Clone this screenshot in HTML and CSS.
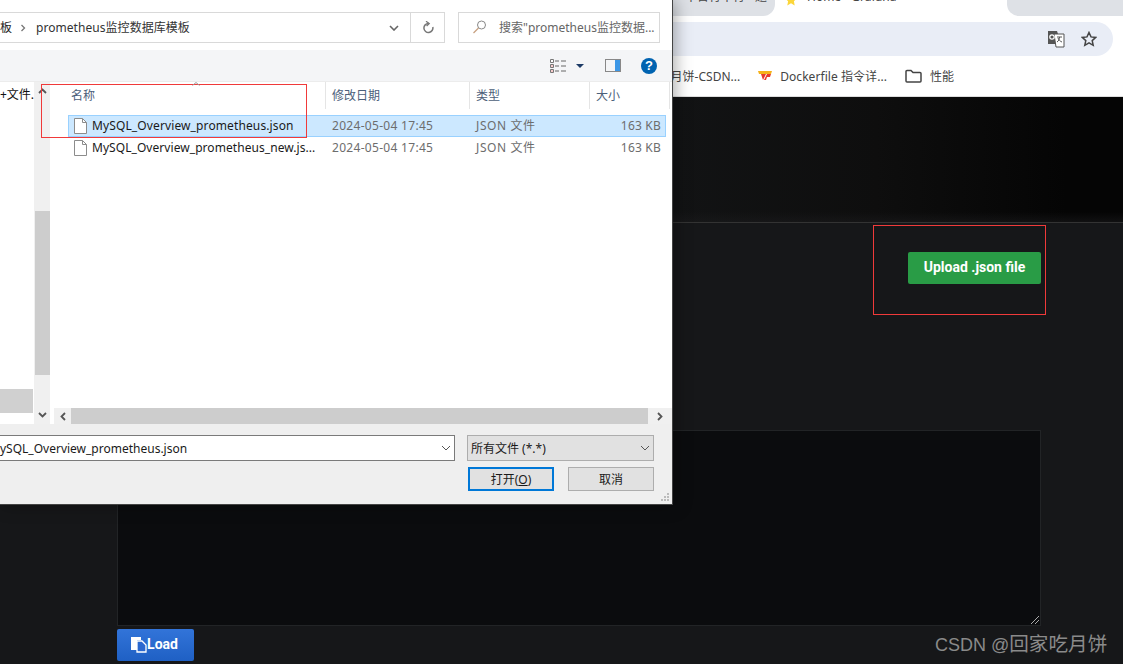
FILE: index.html
```html
<!DOCTYPE html>
<html lang="en">
<head>
    <meta charset="UTF-8">
    <title>Import dashboard</title>
    <link rel="stylesheet" href="styles.css">
</head>
<body>

<!-- Browser behind the dialog -->
<div class="browser">
    <div class="tabs">
        <div class="tab tab-left"><span class="tab-text">平台行不行 - 题</span></div>
        <div class="tab tab-active">
            <svg class="tab-icon" width="12" height="12" viewBox="0 0 12 12"><path d="M6 0l1.8 3.8 4.2.5-3.1 2.9.8 4.2L6 9.3 2.3 11.4l.8-4.2L0 4.3l4.2-.5z" fill="#fbd63a"/></svg>
            <span class="tab-text">Home - Grafana</span>
        </div>
        <div class="tab tab-right"></div>
    </div>
    <div class="address-row">
        <div class="address-bar">
            <svg class="translate-icon" width="18" height="18" viewBox="0 0 18 18">
                <path d="M1 1h9l1 3v10H1z" fill="#555"/>
                <path d="M7 4h10v13H9z" fill="#fff" stroke="#555"/>
                <circle cx="5" cy="7" r="2.2" fill="none" stroke="#fff" stroke-width="1.2"/>
                <path d="M10 7h5M12.500 7c0 2.500-1 4-2.500 5M11 8c.8 2 2.200 3.400 4 4" fill="none" stroke="#555"/>
            </svg>
            <svg class="star-icon" width="16" height="16" viewBox="0 0 16 16"><path d="M8 1.500l2 4.400 4.800.5-3.600 3.200 1 4.700L8 11.900l-4.200 2.400 1-4.700L1.200 6.400 6 5.900z" fill="none" stroke="#444" stroke-width="1.500"/></svg>
        </div>
    </div>
    <div class="bookmarks">
        <span class="bookmark bookmark-cut">月饼-CSDN...</span>
        <span class="bookmark">
            <svg width="14" height="10" viewBox="0 0 14 10"><path d="M0 0h14l-1 3H1z" fill="#f5b21a"/><path d="M3 3h5L5 9zM9 3h4l-1 3H9L8 9H6z" fill="#e8392c"/></svg>
            <span class="bookmark-wide">Dockerfile 指令详...</span>
        </span>
        <span class="bookmark">
            <svg width="17" height="14" viewBox="0 0 17 14"><path d="M1 2.500a1 1 0 0 1 1-1h4l2 2h7a1 1 0 0 1 1 1v7.500a1 1 0 0 1-1 1H2a1 1 0 0 1-1-1z" fill="none" stroke="#444" stroke-width="1.500"/></svg>
            性能
        </span>
    </div>
    <div class="page-header"></div>
    <div class="page-body">
        <div class="upload-row"><button class="upload-btn">Upload .json file</button></div>
        <div class="json-box">
            <svg class="resize-grip" width="10" height="10" viewBox="0 0 10 10"><path d="M1 9l8-8M5 9l4-4" stroke="#aaa" fill="none"/></svg>
        </div>
        <button class="load-btn">
            <svg width="16" height="17" viewBox="0 0 16 17"><path d="M0 1h10v3H6v10H0z" fill="#fff"/><path d="M6 5h5l4 4v7H6z" fill="#2a68cf" stroke="#fff" stroke-width="1.300"/></svg>Load
        </button>
    </div>
</div>

<!-- File open dialog -->
<div class="dialog">
    <div class="dlg-top">
        <div class="path-box">
            <span class="crumb">板</span>
            <svg width="6" height="8" viewBox="0 0 6 8"><path d="M1.500 1l3 3-3 3" fill="none" stroke="#777" stroke-width="1.300"/></svg>
            <span class="crumb crumb-last">prometheus监控数据库模板</span>
            <svg class="path-drop" width="10" height="6" viewBox="0 0 10 6"><path d="M1 1l4 4 4-4" fill="none" stroke="#666" stroke-width="1.600"/></svg>
            <span class="path-refresh">
                <svg width="12" height="13" viewBox="0 0 12 13"><path d="M6.500 2.500A4.500 4.500 0 1 0 10.800 6" fill="none" stroke="#777" stroke-width="1.500"/><path d="M4 .3l3.200 2.200L4.600 5" fill="none" stroke="#777" stroke-width="1.300"/></svg>
            </span>
        </div>
        <div class="search-box">
            <svg width="14" height="14" viewBox="0 0 14 14"><circle cx="8.500" cy="5" r="4" fill="none" stroke="#888"/><path d="M5.500 8l-5 5" stroke="#c8a080" stroke-width="1.200"/></svg>
            <span>搜索"prometheus监控数据...</span>
        </div>
    </div>

    <div class="dlg-ribbon">
        <svg width="17" height="14" viewBox="0 0 17 14">
            <path d="M.5.500h3v3h-3zM.5 5.500h3v3h-3zM.5 10.500h3v3h-3z" fill="#fff" stroke="#777"/>
            <path d="M5 2h4M11 2h5M5 7h4M11 7h5M5 12h4M11 12h5" stroke="#666"/>
            <path d="M1.500 7h1M1.500 12h1" stroke="#d33"/>
        </svg>
        <svg class="view-caret" width="8" height="4" viewBox="0 0 8 4"><path d="M0 0h8L4 4z" fill="#1c3a66"/></svg>
        <svg class="pane-icon" width="16" height="13" viewBox="0 0 16 13"><path d="M0 0h16v13H0z" fill="#888"/><path d="M1 1h9v11H1z" fill="#f4f5f7"/><path d="M10 1h5v11h-5z" fill="#3c97e6"/></svg>
        <span class="help-icon">?</span>
    </div>

    <div class="dlg-main">
        <div class="nav-pane">
            <div class="nav-tree">
                <span class="nav-item">+文件.</span>
                <span class="nav-selected"></span>
            </div>
            <div class="nav-scroll">
                <svg width="9" height="6" viewBox="0 0 9 6"><path d="M1 5l3.500-3.500L8 5" fill="none" stroke="#555" stroke-width="1.800"/></svg>
                <span class="nav-thumb"></span>
                <svg width="9" height="6" viewBox="0 0 9 6"><path d="M1 1l3.500 3.500L8 1" fill="none" stroke="#555" stroke-width="1.800"/></svg>
            </div>
        </div>

        <div class="file-pane">
            <div class="file-head">
                <span class="col col-name">名称</span>
                <span class="col col-date">修改日期</span>
                <span class="col col-type">类型</span>
                <span class="col col-size">大小</span>
            </div>
            <div class="file-row selected">
                <svg class="file-icon" width="13" height="16" viewBox="0 0 13 16"><path d="M.5.500h8l4 4v11H.500z" fill="#fff" stroke="#8c8c8c"/><path d="M8.500.500v4h4" fill="none" stroke="#8c8c8c"/></svg>
                <span class="file-name">MySQL_Overview_prometheus.json</span>
                <span class="file-date">2024-05-04 17:45</span>
                <span class="file-type">JSON 文件</span>
                <span class="file-size">163 KB</span>
            </div>
            <div class="file-row">
                <svg class="file-icon" width="13" height="16" viewBox="0 0 13 16"><path d="M.5.500h8l4 4v11H.500z" fill="#fff" stroke="#8c8c8c"/><path d="M8.500.500v4h4" fill="none" stroke="#8c8c8c"/></svg>
                <span class="file-name file-name-long">MySQL_Overview_prometheus_new.js...</span>
                <span class="file-date">2024-05-04 17:45</span>
                <span class="file-type">JSON 文件</span>
                <span class="file-size">163 KB</span>
            </div>
            <div class="h-scroll">
                <span class="h-arrow"><svg width="6" height="9" viewBox="0 0 6 9"><path d="M5 1L1.500 4.500 5 8" fill="none" stroke="#555" stroke-width="1.800"/></svg></span>
                <span class="h-thumb"></span>
                <span class="h-arrow"><svg width="6" height="9" viewBox="0 0 6 9"><path d="M1 1l3.500 3.500L1 8" fill="none" stroke="#555" stroke-width="1.800"/></svg></span>
            </div>
        </div>
    </div>

    <div class="dlg-footer">
        <div class="footer-inputs">
            <div class="name-input">
                <span>ySQL_Overview_prometheus.json</span>
                <svg width="10" height="6" viewBox="0 0 10 6"><path d="M1 1l4 4 4-4" fill="none" stroke="#555"/></svg>
            </div>
            <div class="type-select">
                <span>所有文件 (*.*)</span>
                <svg width="10" height="6" viewBox="0 0 10 6"><path d="M1 1l4 4 4-4" fill="none" stroke="#555"/></svg>
            </div>
        </div>
        <div class="footer-btns">
            <button class="dlg-btn dlg-btn-main">打开(<u>O</u>)</button>
            <button class="dlg-btn">取消</button>
        </div>
    </div>
    <svg class="dlg-grip" width="9" height="9" viewBox="0 0 9 9"><path d="M6 0h2v2H6zM3 3h2v2H3zM6 3h2v2H6zM0 6h2v2H0zM3 6h2v2H3zM6 6h2v2H6z" fill="#bbb"/></svg>
</div>

<!-- Red annotation boxes and watermark -->
<div class="mark mark-files"></div>
<div class="mark mark-upload"></div>
<svg class="sort-caret" width="8" height="4" viewBox="0 0 8 4"><path d="M.5 3.500L4 .5l3.500 3" fill="none" stroke="#999"/></svg>
<div class="watermark">CSDN @<span class="watermark-cjk">回家吃月饼</span></div>

</body>
</html>
```

FILE: styles.css
```css
body {
    margin: 0;
    width: 1123px;
    height: 664px;
    overflow: hidden;
    position: relative;
    background: #161719;
    font-family: "Noto Sans", "Noto Sans CJK SC", sans-serif;
}

/* Browser */
.browser {
    display: flex;
    flex-direction: column;
    height: 664px;
}

.tabs {
    display: flex;
    height: 22px;
    padding-left: 640px;
    background: #fff;
    overflow: hidden;
    flex-shrink: 0;
}

.tab {
    height: 16px;
    background: #dee1e6;
    font-size: 12px;
    line-height: 12px;
    color: #444;
    overflow: hidden;
}

.tab-text {
    display: block;
    margin-top: -9px;
}

.tab-left {
    width: 135px;
    padding-left: 45px;
    box-sizing: border-box;
    border-radius: 0 0 12px 0;
}

.tab-active {
    width: 232px;
    padding-left: 10px;
    box-sizing: border-box;
    background: #fff;
    display: flex;
    gap: 10px;
}

.tab-icon {
    margin-top: -6px;
}

.tab-right {
    flex: 1;
    border-radius: 0 0 0 12px;
}

.address-row {
    height: 34px;
    padding-right: 10px;
    background: #fff;
    flex-shrink: 0;
}

.address-bar {
    height: 34px;
    background: #e9edf6;
    border-radius: 0 17px 17px 0;
    display: flex;
    justify-content: flex-end;
    align-items: center;
    padding-right: 16px;
}

.translate-icon {
    margin-right: 16px;
}

.bookmarks {
    height: 40px;
    background: #fff;
    border-bottom: 1px solid #ddd;
    display: flex;
    align-items: center;
    justify-content: flex-end;
    padding-right: 169px;
    gap: 18px;
    font-size: 12px;
    color: #444;
    flex-shrink: 0;
}

.bookmark {
    display: flex;
    align-items: center;
    gap: 8px;
    white-space: nowrap;
}

.bookmark-wide {
    letter-spacing: .06px;
}

.page-header {
    height: 125px;
    flex-shrink: 0;
    background:
        linear-gradient(transparent 92%, rgba(28, 28, 30, .5)),
        linear-gradient(90deg, #121314 60%, #0e0e0e 78%, #050505 95%);
    border-bottom: 1px solid #333;
}

.page-body {
    flex: 1;
    padding: 29px 82px 0 117px;
    background: #161719;
}

.upload-row {
    display: flex;
    justify-content: flex-end;
}

.upload-btn {
    width: 133px;
    height: 32px;
    padding: 0 0 2px;
    border: none;
    border-radius: 2px;
    background: #299c46;
    color: #fff;
    font-family: Roboto, sans-serif;
    font-size: 14px;
    font-weight: 700;
}

.json-box {
    height: 196px;
    margin-top: 146px;
    box-sizing: border-box;
    background: #0b0c0e;
    border: 1px solid #222426;
    display: flex;
    justify-content: flex-end;
    align-items: flex-end;
}

.load-btn {
    display: flex;
    align-items: center;
    justify-content: center;
    width: 77px;
    height: 32px;
    margin-top: 3px;
    padding: 0 2px 2px 0;
    border: none;
    border-radius: 2px;
    background: linear-gradient(#3274d9, #1f60c4);
    color: #fff;
    font-family: Roboto, sans-serif;
    font-size: 14px;
    font-weight: 700;
}

/* Dialog window, sits over the browser */
.dialog {
    position: absolute;
    left: 0;
    top: 0;
    width: 672px;
    height: 504px;
    display: flex;
    flex-direction: column;
    background: #fff;
    border-right: 1px solid #444;
    border-bottom: 1px solid #444;
    box-shadow: 2px 0 16px rgba(0, 0, 0, .35);
    font-size: 12px;
    color: #1e1e1e;
}

.dlg-top {
    height: 50px;
    display: flex;
    box-sizing: border-box;
    padding: 12px 12px 7px 0;
    gap: 13px;
    flex-shrink: 0;
}

.path-box {
    width: 445px;
    display: flex;
    align-items: center;
    box-sizing: border-box;
    border: 1px solid #d9d9d9;
    border-left: none;
    gap: 8px;
}

.crumb {
    margin-top: -2px;
}

.crumb-last {
    margin-left: 2px;
    color: #333;
    letter-spacing: .05px;
}

.path-drop {
    margin-left: auto;
    margin-right: 11px;
}

.path-refresh {
    width: 33px;
    height: 100%;
    display: flex;
    align-items: center;
    justify-content: center;
    border-left: 1px solid #d9d9d9;
    margin-left: -8px;
}

.search-box {
    flex: 1;
    display: flex;
    align-items: center;
    box-sizing: border-box;
    border: 1px solid #d9d9d9;
    padding: 0 0 2px 14px;
    gap: 12px;
    color: #666;
}

.dlg-ribbon {
    height: 32px;
    flex-shrink: 0;
    box-sizing: border-box;
    padding-right: 15px;
    background: #f4f5f7;
    border-bottom: 1px solid #ececec;
    display: flex;
    justify-content: flex-end;
    align-items: center;
}

.view-caret {
    margin-left: 9px;
    margin-right: -1px;
}

.pane-icon {
    margin-left: 22px;
}

.help-icon {
    width: 16px;
    height: 16px;
    margin-left: 20px;
    border-radius: 50%;
    background: #0063b1;
    color: #fff;
    font-family: "Liberation Sans", sans-serif;
    font-size: 13px;
    font-weight: 700;
    line-height: 16px;
    text-align: center;
}

.dlg-main {
    flex: 1;
    display: flex;
    min-height: 0;
}

.nav-pane {
    display: flex;
    width: 50px;
    flex-shrink: 0;
}

.nav-tree {
    width: 34px;
    display: flex;
    flex-direction: column;
    overflow: hidden;
}

.nav-item {
    margin-top: 3px;
    white-space: nowrap;
    color: #111;
}

.nav-selected {
    height: 24px;
    margin-top: 286px;
    margin-right: 1px;
    background: #d0d0d0;
}

.nav-scroll {
    width: 16px;
    background: #f0f0f0;
    display: flex;
    flex-direction: column;
    align-items: center;
    padding-top: 6px;
    box-sizing: border-box;
}

.nav-thumb {
    width: 15px;
    height: 164px;
    margin-top: 117px;
    background: #cdcdcd;
}

.nav-scroll svg:last-child {
    margin-top: 37px;
}

.file-pane {
    flex: 1;
    display: flex;
    flex-direction: column;
    position: relative;
}

.file-head {
    height: 26px;
    display: grid;
    grid-template-columns: 276px 144px 120px 80px;
    margin-bottom: 7px;
    color: #4c607a;
    line-height: 27px;
}

.col {
    border-right: 1px solid #e5e5e5;
    padding-left: 6px;
}

.col-name {
    padding-left: 21px;
}

.file-row {
    display: grid;
    grid-template-columns: 257px 144px 120px 73px;
    width: 598px;
    height: 21px;
    margin-left: 18px;
    padding-bottom: 3px;
    box-sizing: border-box;
    border: 1px solid transparent;
    align-items: center;
    color: #6d6d6d;
    position: relative;
}

.file-row.selected {
    background: #cce8ff;
    border-color: #99d1ff;
    height: 22px;
    padding-bottom: 2px;
}

.file-icon {
    position: absolute;
    left: 5px;
    top: 2px;
}

.file-name {
    padding-left: 23px;
    color: #1a1a1a;
    white-space: nowrap;
    letter-spacing: .12px;
}

.file-name-long {
    letter-spacing: .06px;
}

.file-date {
    grid-column: 2;
    padding-left: 6px;
    letter-spacing: .3px;
}

.file-type {
    padding-left: 6px;
    letter-spacing: .6px;
}

.file-size {
    padding-right: 2px;
    text-align: right;
    letter-spacing: .2px;
}

.h-scroll {
    margin-top: auto;
    margin-left: 4px;
    height: 16px;
    display: flex;
    background: #f0f0f0;
}

.h-arrow {
    width: 17px;
    display: flex;
    align-items: center;
    justify-content: center;
}

.h-thumb {
    width: 577px;
    background: #cdcdcd;
}

.h-arrow:last-child {
    width: 24px;
}

.dlg-footer {
    height: 80px;
    flex-shrink: 0;
    box-sizing: border-box;
    padding-top: 11px;
    background: #efefef;
}

.footer-inputs {
    display: flex;
    gap: 12px;
}

.name-input {
    width: 455px;
    height: 26px;
    box-sizing: border-box;
    background: #fff;
    border: 1px solid #7a7a7a;
    border-left: none;
    display: flex;
    align-items: center;
    justify-content: space-between;
    padding-right: 3px;
    color: #1a1a1a;
}

.type-select {
    width: 187px;
    height: 26px;
    box-sizing: border-box;
    background: #e1e1e1;
    border: 1px solid #adadad;
    display: flex;
    align-items: center;
    justify-content: space-between;
    padding: 0 3px 0 3px;
    color: #1a1a1a;
}

.footer-btns {
    display: flex;
    justify-content: flex-end;
    gap: 14px;
    padding-right: 18px;
    margin-top: 6px;
}

.dlg-btn {
    width: 86px;
    height: 24px;
    padding: 0;
    background: #e1e1e1;
    border: 1px solid #adadad;
    font-family: inherit;
    font-size: 12px;
    color: #1a1a1a;
}

.dlg-btn-main {
    border: 2px solid #0078d7;
}

.dlg-grip {
    position: absolute;
    right: 2px;
    bottom: 2px;
}

/* Annotations */
.mark {
    position: absolute;
    box-sizing: border-box;
    border: 1px solid #f03a3a;
}

.mark-files {
    left: 41px;
    top: 84px;
    width: 266px;
    height: 54px;
}

.mark-upload {
    left: 873px;
    top: 225px;
    width: 173px;
    height: 90px;
}

.sort-caret {
    position: absolute;
    left: 192px;
    top: 82px;
}

.watermark {
    position: absolute;
    left: 935px;
    top: 632px;
    font-family: "Liberation Sans", "Noto Sans CJK SC", sans-serif;
    font-size: 18px;
    line-height: 25px;
    color: #8a8a8a;
    white-space: nowrap;
}

.watermark-cjk {
    font-size: 19.6px;
}
```
